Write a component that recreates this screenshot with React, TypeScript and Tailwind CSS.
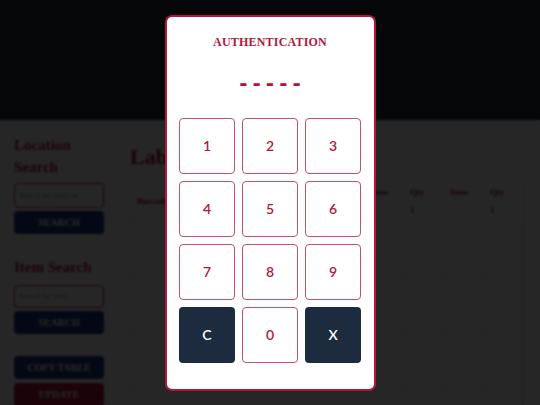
import { useState } from 'react';

const keys = ['1', '2', '3', '4', '5', '6', '7', '8', '9', 'C', '0', 'X'];

function Sidebar() {
  return (
    <aside className="w-[118px] shrink-0 border-r border-gray-200 px-[14px] pt-[14px]" style={{ fontFamily: '"Liberation Serif", serif' }}>
      <h2 className="text-[15px] font-bold leading-[22px] text-[#b3163c]">Location Search</h2>
      <input
        className="mt-[5px] block h-[25px] w-[90px] rounded border border-[#b3163c] px-1 text-[8px]"
        placeholder="Search by location"
      />
      <button className="mt-[3px] block h-[23px] w-[90px] rounded bg-[#1d3a8a] text-[10px] font-bold text-white">SEARCH</button>
      <div className="mt-[16px] border-t border-gray-200 pt-[5px]">
        <h2 className="text-[15px] font-bold leading-[22px] text-[#b3163c]">Item Search</h2>
        <input
          className="mt-[7px] block h-[23px] w-[90px] rounded border border-[#b3163c] px-1 text-[8px]"
          placeholder="Search by item..."
        />
        <button className="mt-[3px] block h-[23px] w-[90px] rounded bg-[#1d3a8a] text-[10px] font-bold text-white">SEARCH</button>
      </div>
      <div className="mt-[14px] flex flex-col gap-[4px] border-t border-gray-200 pt-[7px]">
        <button className="h-[23px] w-[90px] rounded bg-[#1d3a8a] text-[10px] font-bold text-white">COPY TABLE</button>
        <button className="h-[23px] w-[90px] rounded bg-[#b3163c] text-[10px] font-bold text-white">UPDATE</button>
      </div>
    </aside>
  );
}

function Main() {
  const cols = ['Barcode', 'Item', 'Qty', 'Item', 'Qty', 'Item', 'Qty'];
  return (
    <main className="flex-1 pl-[12px] pr-[16px] pt-[20px]" style={{ fontFamily: '"Liberation Serif", serif' }}>
      <h1 className="text-[22px] font-bold text-[#b3163c]">Labels</h1>
      <div className="mt-[6px] border border-gray-200">
        <div className="grid grid-cols-[1fr_repeat(6,40px)] border-b border-gray-200 px-[6px] py-[6px] text-[9px] font-bold text-[#b3163c]">
          {cols.map((c, i) => (
            <div key={i} className={i === 0 ? 'pt-[9px]' : 'pl-[13px]'}>
              <div>{c}</div>
              {i > 0 && <div className="mt-[4px]">{i % 2 === 0 ? '1' : '\u00a0'}</div>}
            </div>
          ))}
        </div>
        {[0, 1, 2, 3].map((r) => (
          <div key={r} className="grid h-[56px] grid-cols-[1fr_repeat(6,40px)] border-b border-gray-200">
            {cols.map((_, i) => (
              <div key={i} className="border-r border-gray-200" />
            ))}
          </div>
        ))}
      </div>
    </main>
  );
}

export default function App() {
  const [code, setCode] = useState('');

  const press = (k: string) => {
    if (k === 'C') setCode('');
    else if (k === 'X') setCode(code.slice(0, -1));
    else if (code.length < 5) setCode(code + k);
  };

  const display = Array.from({ length: 5 }, (_, i) => (code[i] ? '•' : '-')).join('');

  return (
    <div className="relative h-[405px] w-[540px] overflow-hidden bg-white">
      <header className="h-[120px] bg-[#1b2838]" />
      <div className="flex">
        <Sidebar />
        <Main />
      </div>

      <div className="absolute inset-0 flex items-center justify-center bg-black/85 backdrop-blur-[1px]">
        <div className="flex h-[376px] w-[211px] flex-col items-center rounded-[7px] border-2 border-[#b3163c] bg-white">
          <h2
            className="mt-[16px] text-[12px] font-bold leading-[18px] tracking-[0.2px] text-[#b3163c]"
            style={{ fontFamily: '"Liberation Serif", serif' }}
          >
            AUTHENTICATION
          </h2>
          <div
            className="mt-[20px] pl-[5px] text-[20px] font-bold leading-[24px] tracking-[5px] text-[#b3163c]"
            style={{ fontFamily: '"DejaVu Sans", sans-serif' }}
          >
            {display}
          </div>
          <div className="mt-[23px] grid grid-cols-[repeat(3,56px)] gap-[7px]">
            {keys.map((k) => (
              <button
                key={k}
                onClick={() => press(k)}
                className={
                  k === 'C' || k === 'X'
                    ? 'h-[56px] rounded-[4px] bg-[#1c2b3d] text-[14px] font-semibold text-white'
                    : 'h-[56px] rounded-[4px] border border-[#c4506a] bg-white text-[14px] font-semibold text-[#b3163c]'
                }
                style={{ fontFamily: 'Lato, sans-serif' }}
              >
                {k}
              </button>
            ))}
          </div>
        </div>
      </div>
    </div>
  );
}
